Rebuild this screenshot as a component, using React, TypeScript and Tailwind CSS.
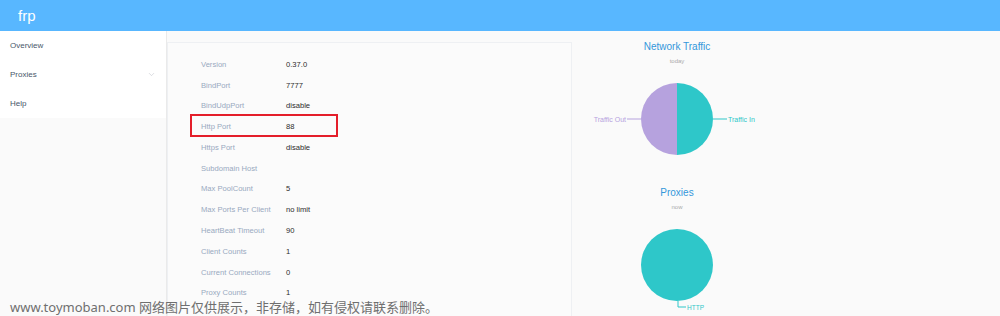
import React from 'react';
import { ChevronDown } from 'lucide-react';

const rows: { label: string; value: string }[] = [
  { label: 'Version', value: '0.37.0' },
  { label: 'BindPort', value: '7777' },
  { label: 'BindUdpPort', value: 'disable' },
  { label: 'Http Port', value: '88' },
  { label: 'Https Port', value: 'disable' },
  { label: 'Subdomain Host', value: '' },
  { label: 'Max PoolCount', value: '5' },
  { label: 'Max Ports Per Client', value: 'no limit' },
  { label: 'HeartBeat Timeout', value: '90' },
  { label: 'Client Counts', value: '1' },
  { label: 'Current Connections', value: '0' },
  { label: 'Proxy Counts', value: '1' },
];

const menu = ['Overview', 'Proxies', 'Help'];

function ChartBlock({ title, sub, children }: { title: string; sub: string; children: React.ReactNode }) {
  return (
    <div className="flex flex-col items-center">
      <div className="h-[18px] leading-[18px] text-[10px] text-[#3397da]">{title}</div>
      <div className="h-[10px] leading-[10px] text-[6px] text-[#aaaaaa]">{sub}</div>
      <svg width="210" height="118" viewBox="0 0 210 118">{children}</svg>
    </div>
  );
}

export default function App() {
  return (
    <div className="relative h-[316px] w-[1000px] overflow-hidden bg-[#fafafa] font-['Liberation_Sans',Arial,sans-serif]">
      <header className="flex h-[31px] items-center bg-[#58b7ff] pl-[18px]">
        <span className="text-[15px] leading-none text-white">frp</span>
      </header>

      <div className="flex h-[285px]">
        <aside className="w-[167px] border-r border-[#eaeaea]">
          <ul className="bg-white">
            {menu.map(item => (
              <li key={item} className="flex h-[29px] items-center justify-between pl-[10px] pr-[10px] text-[8px] text-[#48576a]">
                <span>{item}</span>
                {item === 'Proxies' && <ChevronDown size={9} strokeWidth={1.5} className="text-[#c0c4cc]" />}
              </li>
            ))}
          </ul>
        </aside>

        <main className="flex flex-1 items-start">
          <section className="relative mt-[11px] w-[405px] border border-[#eef0f3] bg-[#fbfbfb] pt-[11px] pl-[33px] pb-4">
            {rows.map(r => (
              <div key={r.label} className="flex h-[20.8px] items-center text-[7.6px]">
                <span className="w-[85px] text-[#99a9bf]">{r.label}</span>
                <span className="text-[#2b2b2b]">{r.value}</span>
              </div>
            ))}
            <div className="absolute left-[22px] top-[71px] h-[23px] w-[148px] border-2 border-[#e41e2a]" />
          </section>

          <div className="flex w-[210px] flex-col">
            <div className="mt-[7px]">
              <ChartBlock title="Network Traffic" sub="today">
                <path d="M105 17 A36 36 0 0 0 105 89 Z" fill="#b6a2de" />
                <path d="M105 17 A36 36 0 0 1 105 89 Z" fill="#2ec7c9" />
                <line x1="55" y1="53" x2="69" y2="53" stroke="#b6a2de" strokeWidth="1" />
                <line x1="141" y1="53" x2="155" y2="53" stroke="#2ec7c9" strokeWidth="1" />
                <text x="54" y="55.5" textAnchor="end" fontSize="7" fill="#b6a2de">Traffic Out</text>
                <text x="156" y="55.5" fontSize="7" fill="#2ec7c9">Traffic In</text>
              </ChartBlock>
            </div>
            <ChartBlock title="Proxies" sub="now">
              <circle cx="105" cy="53" r="36" fill="#2ec7c9" />
              <polyline points="106,89 106,95 114,95" fill="none" stroke="#2ec7c9" strokeWidth="1" />
              <text x="115" y="97.5" fontSize="6.5" fill="#2ec7c9">HTTP</text>
            </ChartBlock>
          </div>
        </main>
      </div>

      <div className="absolute left-[10px] top-[298px] whitespace-nowrap text-[13px] leading-[18px] text-[#6f6f6f] font-['Noto_Sans','Noto_Sans_CJK_SC',sans-serif]">
        www.toymoban.com 网络图片仅供展示，非存储，如有侵权请联系删除。
      </div>
    </div>
  );
}
